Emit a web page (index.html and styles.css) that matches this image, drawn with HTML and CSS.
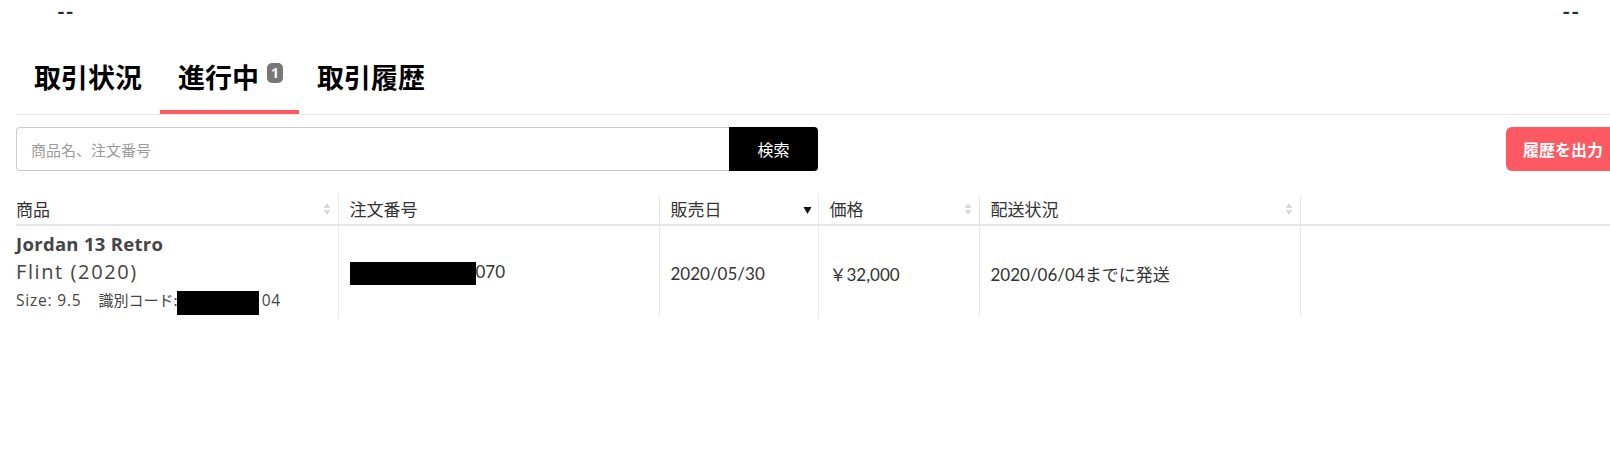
FILE: index.html
```html
<!DOCTYPE html>
<html lang="ja">
<head>
    <meta charset="UTF-8">
    <meta name="viewport" content="width=device-width, initial-scale=1.0">
    <title>取引状況</title>
    <link rel="stylesheet" href="styles.css">
</head>
<body>
    <div class="top-bar">
        <span class="dash">--</span>
        <span class="dash">--</span>
    </div>

    <div class="page">
        <div class="tabs">
            <a class="tab">取引状況</a>
            <a class="tab active">進行中<span class="badge">1</span></a>
            <a class="tab">取引履歴</a>
        </div>

        <div class="search-row">
            <div class="search-box">
                <input class="search-input" type="text" placeholder="商品名、注文番号">
                <button class="search-button">検索</button>
            </div>
            <button class="export-button">履歴を出力</button>
        </div>

        <table class="orders">
            <colgroup>
                <col style="width: 322px">
                <col style="width: 321px">
                <col style="width: 159px">
                <col style="width: 161px">
                <col style="width: 321px">
                <col>
            </colgroup>
            <thead>
                <tr>
                    <th><div class="th-inner">商品<span class="sort"><svg width="8" height="14" viewBox="0 0 8 14"><path d="M4 1 L7.5 6 L0.5 6 Z M4 13 L7.5 8 L0.5 8 Z" fill="#d9d9d9"/></svg></span></div></th>
                    <th><div class="th-inner">注文番号</div></th>
                    <th><div class="th-inner">販売日<span class="sort active"><svg width="9" height="14" viewBox="0 0 9 14"><path d="M0.5 5 L8.5 5 L4.5 12 Z" fill="#111"/></svg></span></div></th>
                    <th><div class="th-inner">価格<span class="sort"><svg width="8" height="14" viewBox="0 0 8 14"><path d="M4 1 L7.5 6 L0.5 6 Z M4 13 L7.5 8 L0.5 8 Z" fill="#d9d9d9"/></svg></span></div></th>
                    <th><div class="th-inner">配送状況<span class="sort"><svg width="8" height="14" viewBox="0 0 8 14"><path d="M4 1 L7.5 6 L0.5 6 Z M4 13 L7.5 8 L0.5 8 Z" fill="#d9d9d9"/></svg></span></div></th>
                    <th></th>
                </tr>
            </thead>
            <tbody>
                <tr>
                    <td class="product">
                        <div class="product-name">Jordan 13 Retro</div>
                        <div class="product-sub">Flint (2020)</div>
                        <div class="product-meta">Size: 9.5<span class="meta-gap"></span><span class="meta-jp">識別コード:</span><span class="redact redact-code"></span>04</div>
                    </td>
                    <td><span class="redact redact-order"></span>070</td>
                    <td>2020/05/30</td>
                    <td>￥32,000</td>
                    <td>2020/06/04までに発送</td>
                    <td></td>
                </tr>
            </tbody>
        </table>
    </div>
</body>
</html>
```

FILE: styles.css
```css
body {
    margin: 0;
    padding: 0;
    background: #ffffff;
    color: #333333;
    font-family: 'Lato', 'Noto Sans CJK JP', sans-serif;
    overflow: hidden;
}

.top-bar {
    display: flex;
    justify-content: space-between;
    height: 24px;
    line-height: 22px;
    padding: 0 30px 0 57px;
    font-size: 21px;
    font-weight: 700;
    letter-spacing: 1px;
    color: #2a2a33;
}

.page {
    padding-left: 16px;
}

/* tabs */
.tabs {
    display: flex;
    align-items: flex-end;
    height: 90px;
    border-bottom: 1px solid #e6e6e6;
}

.tab {
    display: flex;
    align-items: center;
    padding: 0 18px 15px;
    line-height: 36px;
    font-size: 27px;
    font-weight: 700;
    color: #000000;
    font-family: 'Noto Sans CJK JP', sans-serif;
    border-bottom: 4px solid transparent;
    cursor: pointer;
}

.tab.active {
    padding-right: 16px;
    border-bottom-color: #fd5962;
}

.badge {
    display: inline-flex;
    align-items: center;
    justify-content: center;
    width: 16px;
    height: 20px;
    margin-left: 8px;
    margin-bottom: 9px;
    border-radius: 5px;
    background: #777777;
    color: #ffffff;
    font-family: 'Open Sans', sans-serif;
    font-size: 14px;
    font-weight: 700;
    line-height: 1;
}

/* search */
.search-row {
    display: flex;
    align-items: center;
    margin-top: 11px;
    height: 46px;
}

.search-box {
    display: flex;
    width: 802px;
    height: 44px;
}

.search-input {
    flex: 1;
    box-sizing: border-box;
    height: 44px;
    margin: 0;
    padding: 0 14px;
    border: 1px solid #cccccc;
    border-right: none;
    border-radius: 4px 0 0 4px;
    font-family: 'Noto Sans CJK JP', sans-serif;
    font-size: 15px;
    color: #333333;
    outline: none;
}

.search-input::placeholder {
    color: #9a9a9a;
}

.search-button {
    width: 89px;
    height: 44px;
    margin: 0;
    border: none;
    border-radius: 0 4px 4px 0;
    background: #000000;
    color: #ffffff;
    font-family: 'Noto Sans CJK JP', sans-serif;
    font-size: 16px;
    cursor: pointer;
}

.export-button {
    width: 124px;
    height: 44px;
    margin-left: auto;
    margin-right: -20px;
    padding: 0 0 0 17px;
    border: none;
    border-radius: 6px;
    background: #fd5962;
    color: #ffffff;
    text-align: left;
    font-family: 'Noto Sans CJK JP', sans-serif;
    font-size: 16px;
    font-weight: 700;
    cursor: pointer;
}

/* table */
.orders {
    width: 1594px;
    margin-top: 22px;
    border-collapse: collapse;
    table-layout: fixed;
}

.orders th {
    height: 30px;
    padding: 0 0 0 11px;
    border-left: 1px solid #e8e8e8;
    border-bottom: 2px solid #e5e5ea;
    text-align: left;
    font-family: 'Noto Sans CJK JP', sans-serif;
    font-size: 17px;
    font-weight: 400;
    color: #333333;
}

.orders th:first-child,
.orders td:first-child {
    padding-left: 0;
    border-left: none;
}

.th-inner {
    display: flex;
    align-items: center;
    justify-content: space-between;
    padding-right: 7px;
    line-height: 30px;
}

.sort {
    display: flex;
    align-items: center;
}

.sort.active {
    margin-right: -1px;
}

.orders td {
    height: 84px;
    padding: 5px 0 3px 11px;
    border-left: 1px solid #e8e8e8;
    vertical-align: middle;
    font-size: 17px;
    color: #333333;
    white-space: nowrap;
}

.orders td.product {
    padding-top: 4px;
    vertical-align: top;
}

.product-name {
    line-height: 28px;
    font-family: 'Open Sans', sans-serif;
    font-size: 18.5px;
    font-weight: 700;
    letter-spacing: 0.3px;
    color: #444444;
}

.product-sub {
    line-height: 28px;
    font-family: 'Open Sans', sans-serif;
    font-size: 20px;
    color: #444444;
    letter-spacing: 1.6px;
}

.product-meta {
    line-height: 28px;
    font-family: 'Open Sans', sans-serif;
    font-size: 15.5px;
    letter-spacing: 0.8px;
    color: #444444;
}

.meta-jp {
    font-family: 'Noto Sans CJK JP', sans-serif;
    font-size: 15px;
    letter-spacing: 0;
}

.meta-gap {
    display: inline-block;
    width: 17px;
}

.redact {
    display: inline-block;
    background: #000000;
    vertical-align: middle;
}

.redact-code {
    width: 82px;
    height: 24px;
    margin-top: 2px;
    margin-left: -1px;
    margin-right: 3px;
}

.redact-order {
    width: 126px;
    height: 23px;
}
```
